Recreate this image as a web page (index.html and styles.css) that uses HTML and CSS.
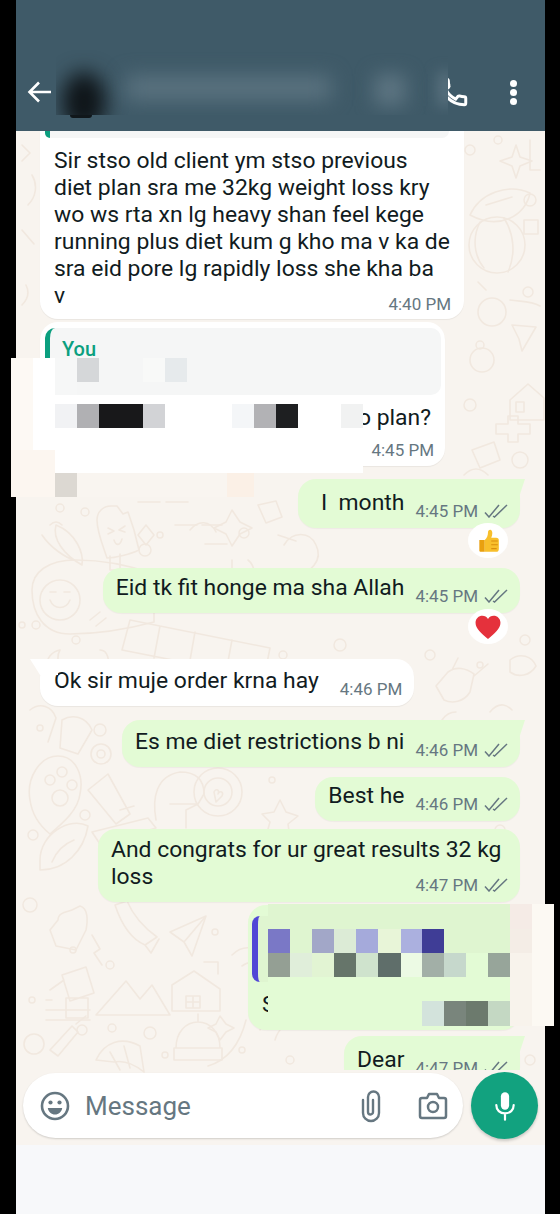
FILE: index.html
```html
<!DOCTYPE html>
<html lang="en">
<head>
    <meta charset="UTF-8">
    <meta name="viewport" content="width=device-width, initial-scale=1.0">
    <title>Chat</title>
    <link rel="stylesheet" href="styles.css">
</head>
<body>
<div class="page">
    <div class="phone">
        <header class="topbar">
            <svg class="back-icon" viewBox="0 0 26 26"><path d="M24 13H3M12 3.500L2.500 13l9.500 9.500" fill="none" stroke="#fff" stroke-width="2.600"/></svg>
            <svg class="call-icon" viewBox="0 0 24 24"><path d="M20 15.400c-1.200 0-2.400-.2-3.500-.6-.4-.1-.7 0-1 .2l-1.600 2c-2.800-1.300-5.500-3.900-6.900-6.800l2-1.700c.3-.3.3-.7.2-1C8.900 6.400 8.700 5.200 8.700 4c0-.5-.4-1-1-1H4.200C3.600 3 3 3.200 3 4c0 9.300 7.700 17 17 17 .7 0 1-.6 1-1.200v-3.400c0-.5-.4-1-1-1z" fill="none" stroke="#fff" stroke-width="2.100"/></svg>
            <div class="menu-dots"><span></span><span></span><span></span></div>
            <div class="contact-blur">
                <div class="blur-avatar"></div>
                <div class="blur-name"></div>
                <div class="blur-status"></div>
                <div class="blur-edge"></div>
            </div>
            <div class="avatar-edge"></div>
        </header>

        <main class="chat">
            <svg class="wallpaper" viewBox="16 131 529 1014">
                <g fill="none" stroke="#f1e8df" stroke-width="1.600" stroke-linecap="round" stroke-linejoin="round">
                    <!-- top right -->
                    <path d="M516 145l4 12 12 4-12 5-4 12-4-12-12-5 12-4z"/>
                    <path d="M470 215c10-22 38-32 60-22-4 22-30 38-60 22zM486 205l26-8"/>
                    <circle cx="497" cy="245" r="28"/><path d="M480 222c-8 16-6 34 4 46M504 218c10 16 12 36 4 54"/>
                    <path d="M524 220h14v14h-14z"/>
                    <path d="M478 312a14 14 0 1 1 28 0 14 14 0 0 1-28 0M486 290l-8-8M510 300c10 2 20 0 30 6"/>
                    <path d="M530 140v30h10"/>
                    <!-- left strip -->
                    <path d="M22 145l8 8-8 8M32 175c6 10 4 22-4 30M22 230l12 14M26 285c4 8 2 14-4 20"/>
                    <!-- next to the quoted message -->
                    <path d="M512 325l24 2-14 24-3-12zM470 360a12 12 0 1 1 24 0 12 12 0 0 1-24 0"/>
                    <path d="M510 400l18-16 16 14v22h-34zM516 402h8v10h-8z"/>
                    <path d="M496 424h12v-8h10v8h12v10h-12v8h-10v-8h-12z"/>
                    <path d="M472 450l22-8 6 18-20 8zM464 475c8-8 16-8 24 0"/>
                    <!-- popsicle, chili, smiley -->
                    <path d="M97 520c0-8 6-14 14-14h6l6 8 5-2 6 18 5 20c-8 4-24 8-32 8-4-12-10-26-10-38z"/>
                    <path d="M110 556v14h10v-16M108 528l6 3-6 3M125 526l-6 4 6 2M114 540c2 6 6 6 8-1"/>
                    <path d="M56 525c-4 14 8 30 26 40 2-12-6-32-26-40zM42 535c8 12 22 22 34 26M50 525c4-4 8-4 12 0"/>
                    <path d="M138 502h22M166 502h22M175 525h22M202 525h20M205 544h22"/>
                    <path d="M146 525l8 10-8 10-8-10z"/>
                    <path d="M232 510l8 12 12 6-12 6-8 12-6-12-12-6 12-6zM258 505l18-4 6 16-16 6z"/>
                    <path d="M284 545c8-14 26-14 32 0 8 16-6 26-20 34M278 535l18 6"/>
                    <path d="M32 590c0-18 16-30 44-30 26 0 50 4 78 14v48c-30 8-60 12-84 12-26 0-38-20-38-44z"/>
                    <circle cx="60" cy="600" r="20"/><path d="M50 600c4 10 16 10 20 0M50 592h6M64 592h6"/>
                    <path d="M90 620l10-8M96 626l10-8"/>
                    <path d="M190 530c8-10 20-10 26 2M232 560v30M248 560c8 6 8 20 4 30"/>
                    <!-- calendar grid -->
                    <path d="M130 620l140 28-6 30-142-28zM160 626l-6 32M195 632l-6 34M232 640l-6 32"/>
                    <path d="M60 650a16 16 0 1 0 18 20 14 14 0 0 1-18-20zM100 650c8 0 10 10 8 24"/>
                    <!-- hands on the right -->
                    <path d="M448 672c8-6 18-4 26 2l-4 18c-6 10-18 12-26 8l-8-14zM474 676l14-12M452 670l6-12"/>
                    <path d="M510 660c10-8 22-4 26 6-6 10-18 12-26 6zM490 712c10-12 18-6 22-2M442 720c4-6 10-8 14-8"/>
                    <path d="M30 710c10-8 22-4 26 8l-8 24M62 720c10-6 24-4 30 10l-14 24-18-6z"/>
                    <!-- paw, tube, glasses, heart circle -->
                    <path d="M30 800c-4-22 10-44 28-44s26 20 22 38c-2 16-16 28-30 40-10-8-18-20-20-34z"/>
                    <circle cx="62" cy="772" r="5"/><circle cx="50" cy="780" r="5"/><circle cx="72" cy="785" r="5"/><circle cx="60" cy="798" r="8"/>
                    <path d="M88 790l20-16 22 40-14 10zM120 810l14-4"/>
                    <circle cx="101" cy="754" r="10"/><circle cx="101" cy="754" r="4"/>
                    <path d="M92 832l56-14 8 10-56 16z"/>
                    <path d="M156 820c-4-22 0-44 24-48 16 0 24 8 24 22l-6 10-12 6 0 18M170 804h26"/>
                    <circle cx="218" cy="792" r="24"/><circle cx="218" cy="792" r="14"/><path d="M214 792c2-4 6-2 4 2 2-4 6-2 4 2l-6 6z"/>
                    <path d="M280 800l6 12 12 4-10 8 2 14-12-6-12 4 4-14-8-8 12-2z"/>
                    <path d="M254 732a14 14 0 1 0 .1 0M420 780v20"/>
                    <!-- taco, bottle -->
                    <path d="M40 860c0-26 30-44 48-34-4 24-22 44-48 44zM52 862c4-10 12-18 22-22"/>
                    <path d="M58 920c0-8 10-8 14-10l8-4c8 2 8 14 6 24l-10 20-20-4-6-16z"/>
                    <!-- rocket, plane, cabin, mountains, house -->
                    <path d="M115 905c6 18 16 34 30 40l12-8c-14-10-24-22-30-36zM145 945l6 8 8-14"/>
                    <path d="M170 932l36-16-14 40-8-14zM184 942l22-26"/>
                    <path d="M92 935l8 14-6 4 8 12"/>
                    <path d="M62 975l24-8 8 26-24 8zM50 990l14-10M46 1010h44M46 1000h6M46 1020h44M66 998h22v20h-22z"/>
                    <path d="M96 1015l30-34 14 18 12-14 18 30zM172 985l22-14 26 18v22h-48z"/>
                    <path d="M186 996h14v12h-14zM193 996v12M186 1002h14"/>
                    <path d="M204 962h14v12"/>
                    <path d="M232 955c12-12 26-8 36 4 8 16 4 30-6 42M242 966c8-6 14-4 20 6M246 1020c-6 24-18 40-38 46"/>
                    <!-- beanie, shrimp, guitar -->
                    <path d="M176 1048c0-16 10-26 22-26s22 10 22 26zM174 1048h48v12h-48zM198 1022v-8"/>
                    <path d="M96 1060c8-18 26-24 44-14l4 26c-10-8-20-12-30-10zM110 1052l10 18M124 1046l6 22"/>
                    <path d="M50 1050l22-24 6 6-20 24zM76 1024l10-8"/>
                    <circle cx="34" cy="1044" r="10"/>
                    <path d="M220 1016l6 8 8 4-8 4-6 8-4-8-8-4 8-4z"/>
                    <path d="M260 1030c10-30 50-40 72-22M275 1040c6-22 36-30 56-14"/>
                </g>
                <g fill="none" stroke="#f1e8df" stroke-width="1.500">
                    <circle cx="498" cy="140" r="4"/><circle cx="530" cy="200" r="6"/><circle cx="470" cy="150" r="5"/><circle cx="528" cy="292" r="5"/>
                    <circle cx="480" cy="345" r="4"/><circle cx="470" cy="405" r="6"/><circle cx="520" cy="460" r="8"/><circle cx="60" cy="508" r="4"/>
                    <circle cx="85" cy="512" r="4"/><circle cx="145" cy="550" r="6"/><circle cx="160" cy="535" r="3"/><circle cx="244" cy="533" r="5"/>
                    <circle cx="22" cy="625" r="3"/><circle cx="36" cy="625" r="4"/><circle cx="76" cy="640" r="4"/><circle cx="283" cy="655" r="4"/>
                    <circle cx="340" cy="645" r="6"/><circle cx="430" cy="655" r="5"/><circle cx="525" cy="640" r="5"/><circle cx="480" cy="665" r="3"/>
                    <circle cx="100" cy="730" r="6"/><circle cx="40" cy="728" r="3"/><circle cx="272" cy="780" r="3"/><circle cx="85" cy="815" r="5"/>
                    <circle cx="33" cy="835" r="5"/><circle cx="500" cy="830" r="5"/><circle cx="524" cy="915" r="5"/><circle cx="30" cy="905" r="7"/>
                    <circle cx="73" cy="950" r="3"/><circle cx="110" cy="965" r="4"/><circle cx="215" cy="932" r="3"/><circle cx="32" cy="1000" r="3"/>
                    <circle cx="82" cy="1030" r="5"/><circle cx="112" cy="1028" r="4"/><circle cx="150" cy="1033" r="6"/><circle cx="165" cy="1055" r="3"/>
                    <circle cx="242" cy="1050" r="3"/><circle cx="530" cy="1060" r="5"/><circle cx="290" cy="1060" r="4"/>
                </g>
            </svg>

            <div class="messages">
                <div class="bubble in stack first-msg">
                    <div class="quote-end"></div>
                    <p class="text">Sir stso old client ym stso previous diet plan sra me 32kg weight loss kry wo ws rta xn lg heavy shan feel kege running plus diet kum g kho ma v ka de sra eid pore lg rapidly loss she kha ba<br>v</p>
                    <div class="meta"><span class="time">4:40 PM</span></div>
                </div>

                <div class="bubble in stack quoted-msg">
                    <div class="quote">
                        <span class="quote-name">You</span>
                    </div>
                    <p class="text right">Do plan?</p>
                    <div class="meta"><span class="time">4:45 PM</span></div>
                </div>

                <div class="bubble out tail month-msg">
                    <p class="text">I&nbsp;&nbsp;month</p>
                    <div class="meta"><span class="time">4:45 PM</span><svg class="ticks" viewBox="0 0 24 14"><path d="M1 8.500l4 4.500L15 1M9 12l1.500 1L23 1" fill="none" stroke="#667781" stroke-width="1.500"/></svg></div>
                    <div class="reaction">
                        <svg viewBox="0 0 24 24"><path d="M4 11h5v11H5.500C4.500 22 4 21.400 4 20.500z" fill="#e9a00f"/><path d="M9 11c2-1.500 3-4 3-7 0-1.500.8-2.500 2-2.500s2 1.300 2 3c0 1.500-.4 3-1 4.500h4.500c1.800 0 2.500 1 2.500 2.300v8c0 1.800-1 2.700-2.500 2.700H9z" fill="#f8bf2b"/><path d="M15 12h6M15 15.500h6M15 19h5" stroke="#d98e0c" stroke-width="1"/></svg>
                    </div>
                </div>

                <div class="bubble out allah-msg">
                    <p class="text">Eid tk fit honge ma sha Allah</p>
                    <div class="meta"><span class="time">4:45 PM</span><svg class="ticks" viewBox="0 0 24 14"><path d="M1 8.500l4 4.500L15 1M9 12l1.500 1L23 1" fill="none" stroke="#667781" stroke-width="1.500"/></svg></div>
                    <div class="reaction">
                        <svg viewBox="0 0 24 24"><path d="M12 23C6 18 .5 13.500.5 8 .5 4 3.500 1.500 6.800 1.500c2.200 0 4 1 5.200 3 1.200-2 3-3 5.200-3 3.300 0 6.300 2.500 6.300 6.500 0 5.500-5.500 10-11.500 15z" fill="#e5313c"/></svg>
                    </div>
                </div>

                <div class="bubble in tail order-msg">
                    <p class="text">Ok sir muje order krna hay</p>
                    <div class="meta"><span class="time">4:46 PM</span></div>
                </div>

                <div class="bubble out tail diet-msg">
                    <p class="text">Es me diet restrictions b ni</p>
                    <div class="meta"><span class="time">4:46 PM</span><svg class="ticks" viewBox="0 0 24 14"><path d="M1 8.500l4 4.500L15 1M9 12l1.500 1L23 1" fill="none" stroke="#667781" stroke-width="1.500"/></svg></div>
                </div>

                <div class="bubble out best-msg">
                    <p class="text">Best he</p>
                    <div class="meta"><span class="time">4:46 PM</span><svg class="ticks" viewBox="0 0 24 14"><path d="M1 8.500l4 4.500L15 1M9 12l1.500 1L23 1" fill="none" stroke="#667781" stroke-width="1.500"/></svg></div>
                </div>

                <div class="bubble out stack congrats-msg">
                    <p class="text">And congrats for ur great results 32 kg loss</p>
                    <div class="meta"><span class="time">4:47 PM</span><svg class="ticks" viewBox="0 0 24 14"><path d="M1 8.500l4 4.500L15 1M9 12l1.500 1L23 1" fill="none" stroke="#667781" stroke-width="1.500"/></svg></div>
                </div>

                <div class="bubble out reply-msg">
                    <div class="quote purple"></div>
                    <p class="text">S</p>
                </div>

                <div class="bubble out tail dear-msg">
                    <p class="text">Dear</p>
                    <div class="meta"><span class="time">4:47 PM</span><svg class="ticks" viewBox="0 0 24 14"><path d="M1 8.500l4 4.500L15 1M9 12l1.500 1L23 1" fill="none" stroke="#667781" stroke-width="1.500"/></svg></div>
                </div>
            </div>

            <div class="composer">
                <div class="input-box">
                    <svg class="emoji-icon" viewBox="0 0 30 30"><circle cx="15" cy="15" r="13" fill="none" stroke="#667781" stroke-width="2.600"/><circle cx="10.500" cy="11.500" r="2.100" fill="#667781"/><circle cx="19.500" cy="11.500" r="2.100" fill="#667781"/><path d="M7.800 17h14.400c-.6 4-3.600 6.500-7.200 6.500S8.400 21 7.800 17z" fill="#667781"/></svg>
                    <span class="placeholder">Message</span>
                    <svg class="clip-icon" viewBox="0 0 22 34"><path d="M3 11v13a8 8 0 0 0 16 0V8a5.500 5.500 0 0 0-11 0v15a2.500 2.500 0 0 0 5 0V11" fill="none" stroke="#667781" stroke-width="2.400" stroke-linecap="round"/></svg>
                    <svg class="camera-icon" viewBox="0 0 30 28"><path d="M2 8c0-1 .8-2 2-2h5l2-4h8l2 4h5c1.200 0 2 1 2 2v16c0 1-.8 2-2 2H4c-1.200 0-2-1-2-2z" fill="none" stroke="#667781" stroke-width="2.500" stroke-linejoin="round"/><circle cx="15" cy="15" r="5" fill="none" stroke="#667781" stroke-width="2.500"/></svg>
                </div>
                <div class="mic-btn">
                    <svg viewBox="0 0 24 32"><rect x="7.500" y="1" width="9" height="19" rx="4.500" fill="#fff"/><path d="M2.500 15c0 5.500 4 9 9.500 9s9.500-3.500 9.500-9M12 24v7" fill="none" stroke="#fff" stroke-width="2.400" stroke-linecap="round"/></svg>
                </div>
            </div>
        </main>

        <div class="navbar"></div>
    </div>

    <!-- pixelated patches laid over the screenshot -->
    <svg class="mosaic" viewBox="0 0 560 1214">
        <!-- left patch -->
        <rect x="11" y="358" width="22" height="92" fill="#fdf9f4"/>
        <rect x="33" y="358" width="22" height="92" fill="#fff"/>
        <rect x="11" y="450" width="44" height="47" fill="#fcf6f0"/>
        <rect x="55" y="395" width="308" height="78" fill="#fff"/>
        <rect x="55" y="358" width="22" height="37" fill="#f6f7f7"/>
        <rect x="77" y="358" width="22" height="24" fill="#d5d7d9"/>
        <rect x="143" y="358" width="22" height="24" fill="#f8f9f8"/>
        <rect x="165" y="358" width="22" height="24" fill="#e6eaec"/>
        <rect x="55" y="404" width="22" height="24" fill="#f1f2f4"/>
        <rect x="77" y="404" width="22" height="24" fill="#b0b0b3"/>
        <rect x="99" y="404" width="44" height="24" fill="#18181a"/>
        <rect x="143" y="404" width="22" height="24" fill="#d2d3d6"/>
        <rect x="232" y="404" width="22" height="24" fill="#f4f6f8"/>
        <rect x="254" y="404" width="22" height="24" fill="#b2b2b5"/>
        <rect x="276" y="404" width="22" height="24" fill="#1e1f21"/>
        <rect x="341" y="404" width="22" height="24" fill="#f1f2f2"/>
        <rect x="55" y="473" width="22" height="24" fill="#dcd8d2"/>
        <rect x="77" y="473" width="150" height="24" fill="#f9f5f0"/>
        <rect x="227" y="473" width="27" height="24" fill="#fbf0e6"/>
        <!-- reply patch -->
        <rect x="268" y="904" width="242" height="25" fill="#dff5d0"/>
        <rect x="268" y="929" width="22" height="24" fill="#7a78c6"/>
        <rect x="290" y="929" width="22" height="24" fill="#dff5d0"/>
        <rect x="312" y="929" width="22" height="24" fill="#a2a7c8"/>
        <rect x="334" y="929" width="22" height="24" fill="#dcebd6"/>
        <rect x="356" y="929" width="22" height="24" fill="#a5aadb"/>
        <rect x="378" y="929" width="23" height="24" fill="#e8f5d8"/>
        <rect x="401" y="929" width="21" height="24" fill="#abb0df"/>
        <rect x="422" y="929" width="22" height="24" fill="#3f3d96"/>
        <rect x="444" y="929" width="66" height="24" fill="#dff5d0"/>
        <rect x="268" y="953" width="22" height="24" fill="#949f94"/>
        <rect x="290" y="953" width="22" height="24" fill="#e0eeda"/>
        <rect x="312" y="953" width="22" height="24" fill="#e2f4d3"/>
        <rect x="334" y="953" width="22" height="24" fill="#66756a"/>
        <rect x="356" y="953" width="22" height="24" fill="#cfe3cd"/>
        <rect x="378" y="953" width="23" height="24" fill="#5f6e6a"/>
        <rect x="401" y="953" width="21" height="24" fill="#ecfae4"/>
        <rect x="422" y="953" width="22" height="24" fill="#a2afa7"/>
        <rect x="444" y="953" width="22" height="24" fill="#c6d8cc"/>
        <rect x="466" y="953" width="22" height="24" fill="#e3fbd5"/>
        <rect x="488" y="953" width="22" height="24" fill="#97a59a"/>
        <rect x="268" y="977" width="242" height="24" fill="#e3fbd5"/>
        <rect x="268" y="1001" width="154" height="25" fill="#e3fbd5"/>
        <rect x="422" y="1001" width="22" height="25" fill="#d3e3dc"/>
        <rect x="444" y="1001" width="22" height="25" fill="#79857c"/>
        <rect x="466" y="1001" width="22" height="25" fill="#6c7a6d"/>
        <rect x="488" y="1001" width="22" height="25" fill="#c4d8c3"/>
        <rect x="510" y="904" width="22" height="25" fill="#f5ebe6"/>
        <rect x="510" y="929" width="22" height="24" fill="#f4ede6"/>
        <rect x="510" y="953" width="22" height="73" fill="#f8f3ec"/>
        <rect x="532" y="904" width="22" height="122" fill="#fcf9f3"/>
    </svg>
</div>
</body>
</html>
```

FILE: styles.css
```css
* {
    margin: 0;
    padding: 0;
    box-sizing: border-box;
}

body {
    background: #000;
    font-family: Roboto, "Liberation Sans", sans-serif;
    color: #111b21;
    overflow: hidden;
}

.page {
    position: relative;
    width: 560px;
    height: 1214px;
}

.phone {
    width: 529px;
    height: 1214px;
    margin-left: 16px;
    display: flex;
    flex-direction: column;
}

/* top bar */
.topbar {
    position: relative;
    height: 131px;
    flex-shrink: 0;
    background: #3f5a68;
    display: flex;
    align-items: center;
    padding: 53px 0 0 11px;
}

.back-icon {
    width: 26px;
    height: 26px;
}

.call-icon {
    width: 34px;
    height: 34px;
    margin-left: auto;
    margin-right: 40px;
}

.menu-dots {
    display: flex;
    flex-direction: column;
    gap: 2px;
    margin-right: 28px;
}

.menu-dots span {
    width: 7px;
    height: 7px;
    border-radius: 50%;
    background: #fff;
}

.contact-blur {
    position: absolute;
    left: 40px;
    top: 50px;
    width: 392px;
    height: 65px;
    overflow: hidden;
    background: #3f5a68;
}

.blur-avatar {
    position: absolute;
    left: 6px;
    top: 22px;
    width: 44px;
    height: 60px;
    border-radius: 50%;
    background: #0f1519;
    filter: blur(10px);
}

.blur-name {
    position: absolute;
    left: 70px;
    top: 26px;
    width: 205px;
    height: 24px;
    background: #5b7380;
    filter: blur(10px);
}

.blur-status {
    position: absolute;
    left: 318px;
    top: 24px;
    width: 32px;
    height: 32px;
    background: #5b7380;
    filter: blur(9px);
}

.blur-edge {
    position: absolute;
    left: 382px;
    top: 22px;
    width: 14px;
    height: 34px;
    background: #5b7380;
    filter: blur(7px);
}

.avatar-edge {
    position: absolute;
    left: 54px;
    top: 115px;
    width: 22px;
    height: 2.500px;
    border-radius: 0 0 12px 12px;
    background: #10171b;
}

/* chat area */
.chat {
    position: relative;
    flex: 1;
    background: #f8f4ef;
    display: flex;
    flex-direction: column;
}

.wallpaper {
    position: absolute;
    top: 0;
    left: 0;
    width: 529px;
    height: 1014px;
}

.messages {
    position: relative;
    height: 939px;
    flex-shrink: 0;
    overflow: hidden;
    display: flex;
    flex-direction: column;
}

.bubble {
    position: relative;
    flex-shrink: 0;
    display: flex;
    align-items: flex-end;
    border-radius: 18px;
    padding: 8px 12px 7px 13px;
}

.bubble.in {
    align-self: flex-start;
    margin-left: 24px;
    background: #fff;
    padding-left: 14px;
    box-shadow: 0 1px 1px rgba(0, 0, 0, 0.06);
}

.bubble.out {
    align-self: flex-end;
    margin-right: 25px;
    background: #e3fbd5;
    box-shadow: 0 1px 1px rgba(0, 0, 0, 0.04);
}

.bubble.stack {
    display: block;
}

.text {
    font-size: 22.900px;
    line-height: 27px;
    margin-bottom: 5px;
    margin-right: 11px;
}

.stack .text {
    margin-right: 0;
    margin-bottom: 0;
}

.text.right {
    text-align: right;
}

.meta {
    display: flex;
    align-items: center;
    justify-content: flex-end;
    gap: 6px;
    height: 20px;
    flex-shrink: 0;
}

.stack .meta {
    margin-top: -15px;
}

.time {
    font-size: 17px;
    line-height: 20px;
    color: #667781;
}

.ticks {
    width: 24px;
    height: 14px;
}

/* tails on the first bubble of a group */
.bubble.out.tail::after {
    content: '';
    position: absolute;
    top: 0;
    right: -5px;
    width: 22px;
    height: 16px;
    background: #e3fbd5;
    clip-path: polygon(0 0, 100% 0, 76% 100%, 0 100%);
}

.bubble.in.tail::after {
    content: '';
    position: absolute;
    top: 0;
    left: -10px;
    width: 28px;
    height: 16px;
    background: #fff;
    clip-path: polygon(0 0, 100% 0, 100% 100%, 36% 100%);
}

/* one message each, the gaps and widths vary */
.bubble.first-msg {
    width: 424px;
    padding: 0 13px 5px 14px;
    border-radius: 0 0 18px 18px;
}

.quote-end {
    height: 7px;
    margin: 0 2px 9px -9px;
    background: #f5f6f6;
    border-radius: 0 0 10px 10px;
    position: relative;
}

.quote-end::before {
    content: '';
    position: absolute;
    left: 0;
    top: 0;
    width: 5px;
    height: 7px;
    background: #0b9f7f;
    border-radius: 0 0 0 5px;
}

.bubble.quoted-msg {
    width: 405px;
    margin-top: 3px;
    padding: 6px 4px 6px 5px;
}

.quote {
    position: relative;
    height: 67px;
    background: #f5f6f6;
    border-radius: 10px;
    border-left: 5px solid #0b9f7f;
    padding: 8px 0 0 12px;
}

.quote-name {
    font-size: 20px;
    font-weight: 500;
    line-height: 26px;
    color: #0b9f7f;
    display: block;
}

.quoted-msg .text {
    margin: 9px 10px 0 0;
}

.quoted-msg .meta {
    margin: 9px 7px 0 0;
}

.month-msg {
    margin-top: 13px;
    padding-top: 10px;
    width: 222px;
    justify-content: flex-end;
}

.reaction {
    position: absolute;
    right: 12px;
    top: calc(100% - 5px);
    width: 40px;
    height: 35px;
    background: #fff;
    border-radius: 50%;
    display: flex;
    align-items: center;
    justify-content: center;
}

.reaction svg {
    width: 26px;
    height: 26px;
}

.allah-msg {
    margin-top: 40px;
    padding-top: 6px;
}

.allah-msg .reaction {
    top: calc(100% - 4px);
}

.order-msg {
    margin-top: 46px;
}

.order-msg .text {
    margin-right: 21px;
}

.diet-msg {
    margin-top: 14px;
}

.best-msg {
    margin-top: 10px;
    padding-top: 5px;
}

.bubble.congrats-msg {
    width: 422px;
    margin-top: 8px;
    padding: 7px 12px 7px 13px;
}

.reply-msg {
    display: block;
    width: 272px;
    height: 125px;
    margin-top: 3px;
    padding: 11px 0 0 4px;
}

.quote.purple {
    height: 66px;
    padding: 0;
    background: #dff5d0;
    border-left: 6px solid #5147d6;
    border-radius: 8px 0 0 8px;
}

.reply-msg .text {
    margin: 9px 0 0 10px;
}

.dear-msg {
    width: 176px;
    margin-top: 6px;
    padding-top: 10px;
    justify-content: flex-end;
}

/* message box */
.composer {
    position: relative;
    flex: 1;
    display: flex;
    align-items: center;
    gap: 8px;
    padding: 0 7px 4px;
}

.input-box {
    width: 440px;
    height: 65px;
    flex-shrink: 0;
    background: #fff;
    border-radius: 33px;
    box-shadow: 0 1px 2px rgba(0, 0, 0, 0.16);
    display: flex;
    align-items: center;
    padding-left: 17px;
}

.emoji-icon {
    width: 30px;
    height: 30px;
    flex-shrink: 0;
}

.placeholder {
    font-size: 26px;
    color: #667781;
    margin-left: 15px;
    flex: 1;
}

.clip-icon {
    width: 22px;
    height: 34px;
    flex-shrink: 0;
}

.camera-icon {
    width: 30px;
    height: 28px;
    margin: 0 15px 0 36px;
    flex-shrink: 0;
}

.mic-btn {
    width: 67px;
    height: 67px;
    flex-shrink: 0;
    border-radius: 50%;
    background: #12a27f;
    box-shadow: 0 2px 3px rgba(0, 0, 0, 0.18);
    display: flex;
    align-items: center;
    justify-content: center;
}

.mic-btn svg {
    width: 22px;
    height: 30px;
}

.navbar {
    height: 69px;
    flex-shrink: 0;
    background: #f7f8fa;
}

.mosaic {
    position: absolute;
    top: 0;
    left: 0;
    width: 560px;
    height: 1214px;
    pointer-events: none;
}
```
